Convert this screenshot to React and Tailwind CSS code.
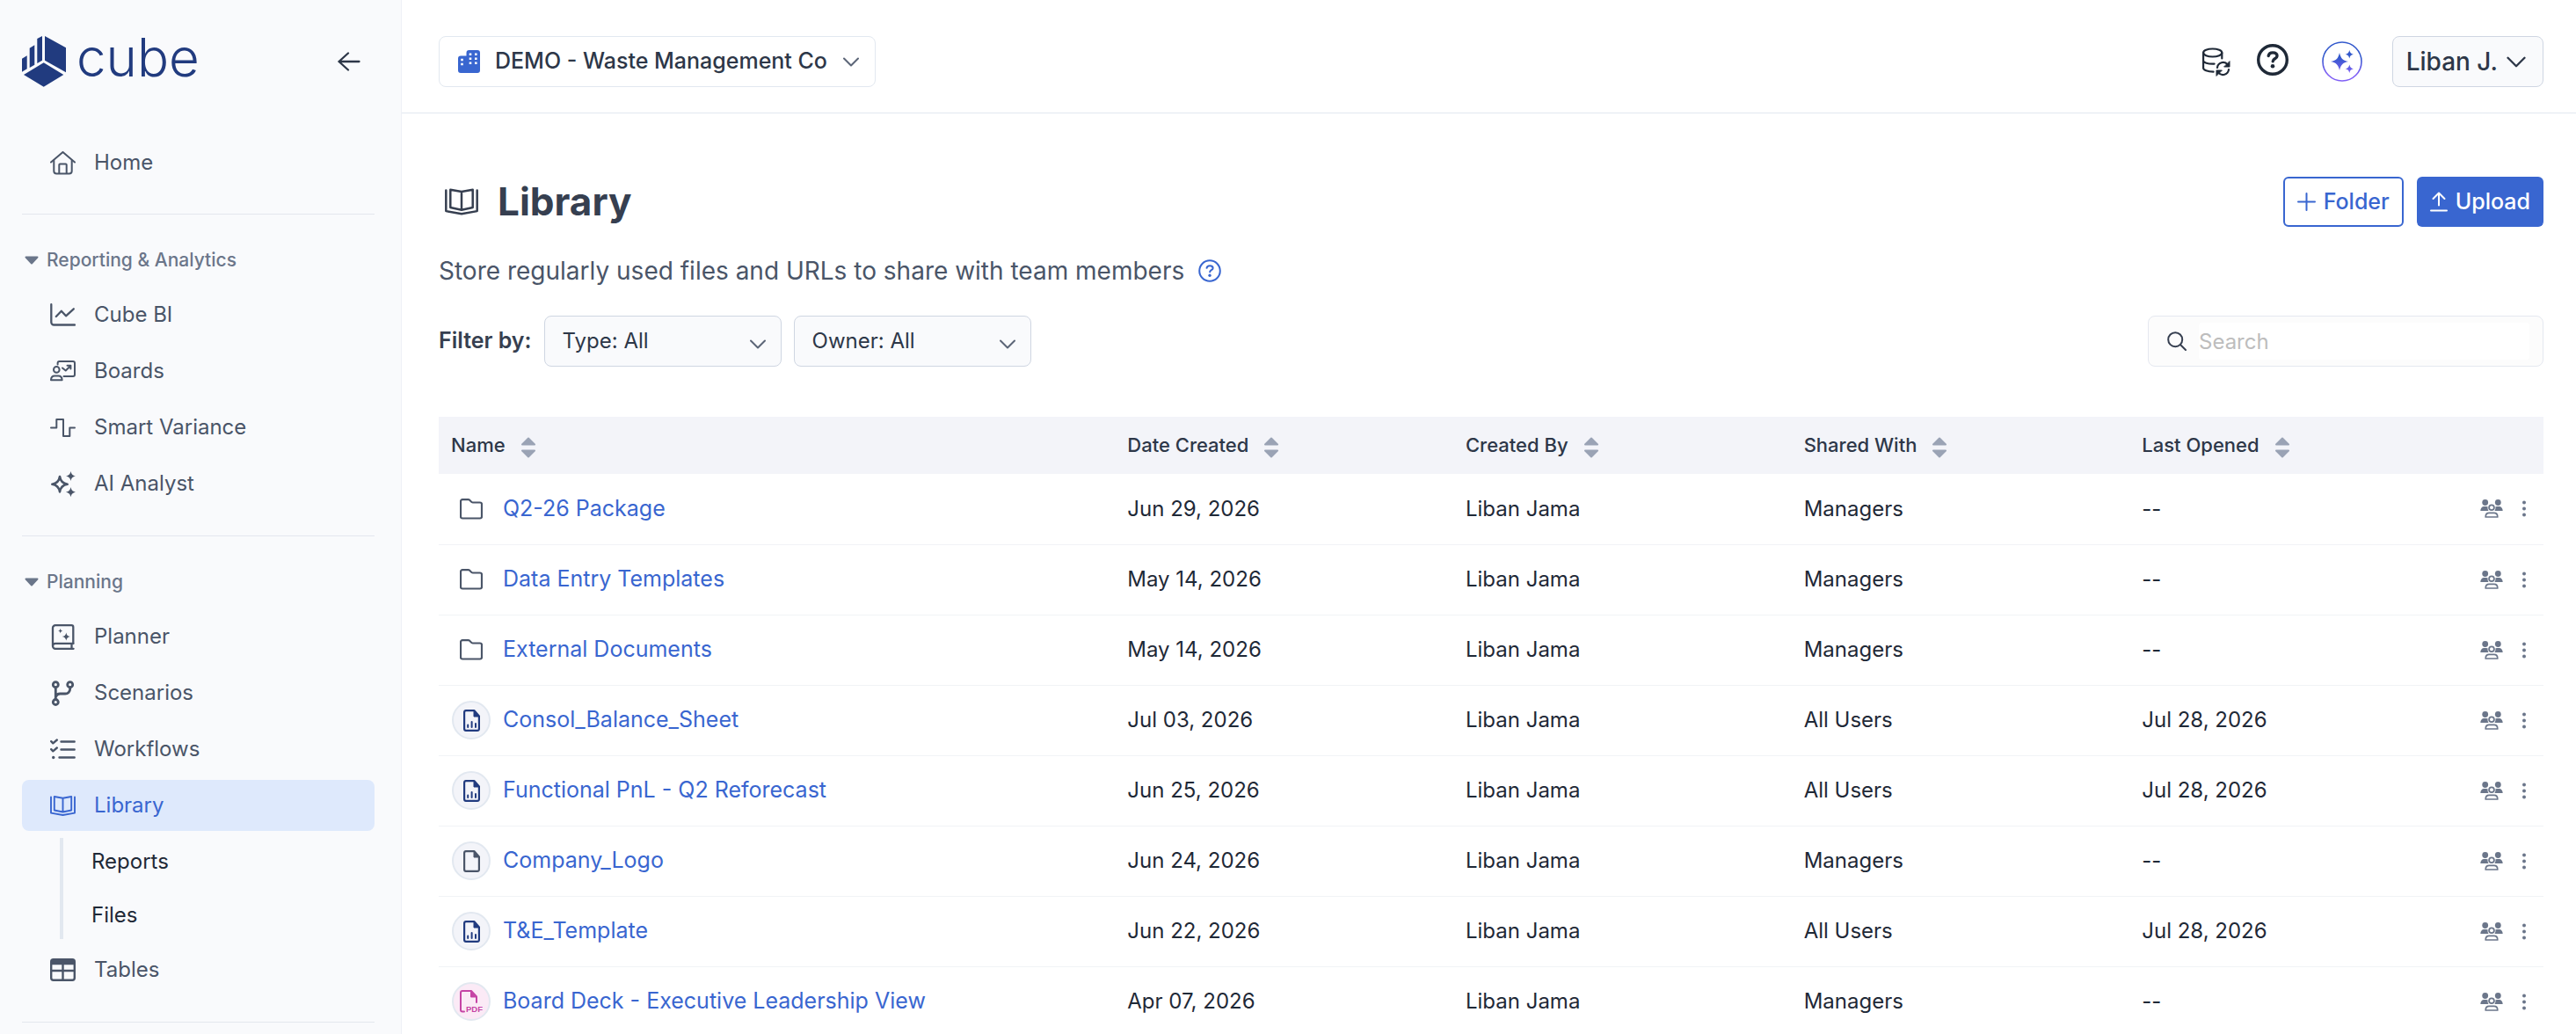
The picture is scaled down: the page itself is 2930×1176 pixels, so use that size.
import { useState } from 'react';

const STAR = 'M0 -10C1.5 -3.5 3.5 -1.5 10 0C3.5 1.5 1.5 3.5 0 10C-1.5 3.5 -3.5 1.5 -10 0C-3.5 -1.5 -1.5 -3.5 0 -10Z';

function Icon({ w, h, sw = 2, className = '', children }) {
  return (
    <svg
      width={w}
      height={h}
      viewBox={`0 0 ${w} ${h}`}
      fill="none"
      stroke="currentColor"
      strokeWidth={sw}
      strokeLinecap="round"
      strokeLinejoin="round"
      aria-hidden="true"
      className={`shrink-0 ${className}`}
    >
      {children}
    </svg>
  );
}

const Star = ({ x, y, s }) => (
  <path d={STAR} transform={`translate(${x} ${y}) scale(${s})`} fill="currentColor" stroke="none" />
);

const HomeIcon = () => (
  <Icon w={29} h={27}>
    <path d="M1 12.5 14.5 1 28 12.5" />
    <path d="M4.3 10.5V22.5a3 3 0 0 0 3 3h14.4a3 3 0 0 0 3-3V10.5" />
    <path d="M10.3 25V15.5a1 1 0 0 1 1-1h6.4a1 1 0 0 1 1 1V25" />
  </Icon>
);

const ChartIcon = () => (
  <Icon w={29} h={26} sw={2.3}>
    <path d="M1.3 1.2V21.5a3 3 0 0 0 3 3H28" />
    <path d="M6.8 15 12.8 8.7 18 14.3 26.8 6.3" />
  </Icon>
);

const BoardsIcon = () => (
  <Icon w={29} h={24}>
    <path d="M8.6 4.5V3a2 2 0 0 1 2-2H26a2 2 0 0 1 2 2v13a2 2 0 0 1-2 2H15.5" />
    <circle cx="7.3" cy="10.4" r="3.3" />
    <path d="M1 22.3c0-3.2 2-4.8 4.3-4.8h4c2.4 0 4.3 1.6 4.3 4.8z" />
    <path d="M14 8.5l3.7 3L22.8 6.5M19.5 5.8h3.9v3.7" />
  </Icon>
);

const VarianceIcon = () => (
  <Icon w={29} h={21}>
    <path d="M1 10.5H7.3V1H15V20H22.3V10.5H28" />
  </Icon>
);

const SparkleIcon = () => (
  <Icon w={29} h={29} sw={2.6}>
    <path d="M11 6c.8 5.3 3.4 7.9 8.7 8.7-5.3.8-7.9 3.4-8.7 8.7-.8-5.3-3.4-7.9-8.7-8.7C7.6 13.9 10.2 11.3 11 6z" />
    <Star x={23.5} y={5.5} s={0.56} />
    <Star x={23.5} y={23.7} s={0.56} />
  </Icon>
);

const PlannerIcon = () => (
  <Icon w={29} h={29} sw={2.3}>
    <path d="M26.6 21.8H6a3 3 0 0 0 0 6H26.6M3 24.8V4.2a3 3 0 0 1 3-3h18.3a2 2 0 0 1 2 2V21.8M24.5 22v5.5" />
    <Star x={11.7} y={7.5} s={0.28} />
    <Star x={18.3} y={14} s={0.46} />
  </Icon>
);

const BranchIcon = () => (
  <Icon w={29} h={29} sw={2.8}>
    <circle cx="6.3" cy="4.7" r="3" />
    <circle cx="22.7" cy="4.7" r="3" />
    <circle cx="6.3" cy="24.5" r="3" />
    <path d="M6.3 8v13M22.7 8v1.5a5.5 5.5 0 0 1-5.5 5.5H11.5a5 5 0 0 0-5 3.5" />
  </Icon>
);

const ChecklistIcon = () => (
  <Icon w={29} h={24} sw={2.4}>
    <path d="M1.2 3.2 3.3 5.3 7.8 1.5M1.2 12.2l2.1 2.1 4.5-3.8M12.5 3.5H27.7M12.5 12.5H27.7M10.5 21.5H27.7" />
    <circle cx="3.7" cy="21.5" r="1.7" fill="currentColor" stroke="none" />
  </Icon>
);

const BookIcon = ({ w = 29, h = 23 }) => (
  <svg
    width={w}
    height={h}
    viewBox="0 0 29 23"
    fill="none"
    stroke="currentColor"
    strokeWidth="1.9"
    strokeLinecap="round"
    strokeLinejoin="round"
    aria-hidden="true"
    className="shrink-0"
  >
    <path d="M1 1.5V19.6L14.5 22 28 19.6V1.5" />
    <path d="M4.8 1 14.5 2.7 24.2 1V16.5L14.5 18.5 4.8 16.5zM14.5 2.7V18.5" />
  </svg>
);

const TableIcon = () => (
  <Icon w={29} h={26} sw={2.4}>
    <rect x="1.2" y="1.2" width="26.6" height="23.6" rx="2.5" />
    <path d="M1.5 1.5h26v5h-26z" fill="currentColor" stroke="none" />
    <path d="M2 6h25M2 14h25M14.5 6v18" />
  </Icon>
);

const Chevron = ({ w = 18, h = 11, className = '' }) => (
  <svg
    width={w}
    height={h}
    viewBox="0 0 18 11"
    fill="none"
    stroke="currentColor"
    strokeWidth="2"
    strokeLinecap="round"
    strokeLinejoin="round"
    aria-hidden="true"
    className={`shrink-0 ${className}`}
  >
    <path d="M1 1.5 9 9.5 17 1.5" />
  </svg>
);

const BuildingIcon = () => (
  <svg width="26" height="26" viewBox="0 0 26 26" aria-hidden="true" className="shrink-0 text-[#3966d0]">
    <path fill="currentColor" d="M3 6.5H9.5V3a3 3 0 0 1 3-3H22a3 3 0 0 1 3 3V23a3 3 0 0 1-3 3H3a3 3 0 0 1-3-3V9.5a3 3 0 0 1 3-3z" />
    <path stroke="#fff" strokeWidth="2.6" d="M4.5 9.7v2.6M4.5 14.7v2.6M14 3.5v2.6M14 8.5v2.6M14 13.5v2.6M20.3 3.5v2.6M20.3 8.5v2.6M20.3 13.5v2.6" />
  </svg>
);

const DatabaseIcon = () => (
  <Icon w={32} h={33} sw={2.2}>
    <ellipse cx="11.7" cy="6" rx="10.6" ry="4.5" />
    <path d="M1.1 6V23.5c0 2 4.5 4 11.5 4.2M1.1 15c0 2 5 4 12.5 3.6M22.3 6V12.5" />
    <path d="M17 23a6.6 6.6 0 0 1 11.8-3.4M30 25a6.6 6.6 0 0 1-11.8 3.4" />
    <path d="M31 16v6h-6zM16 32v-6h6z" fill="currentColor" strokeWidth="1" />
  </Icon>
);

const HelpIcon = ({ size, sw }) => (
  <svg
    width={size}
    height={size}
    viewBox="0 0 36 36"
    fill="none"
    stroke="currentColor"
    strokeWidth={sw}
    strokeLinecap="round"
    strokeLinejoin="round"
    aria-hidden="true"
  >
    <circle cx="18" cy="18" r="16.3" />
    <path d="M13.2 13.6c.4-2.6 2.2-3.7 4.9-3.7s4.9 1.3 4.9 3.8c0 3.1-4.8 3.1-4.8 6" />
    <circle cx="18" cy="25.3" r="2.3" fill="currentColor" stroke="none" />
  </svg>
);

const AiBadgeIcon = () => (
  <svg width="46" height="46" viewBox="0 0 46 46" fill="none" aria-hidden="true">
    <defs>
      <linearGradient id="ai-ring" x1="0" y1="0" x2="0" y2="46" gradientUnits="userSpaceOnUse">
        <stop offset="0.4" stopColor="#3359cc" />
        <stop offset="0.8" stopColor="#8060f5" />
      </linearGradient>
    </defs>
    <circle cx="23" cy="23" r="22" stroke="url(#ai-ring)" strokeWidth="1.6" />
    <g fill="url(#ai-ring)">
      <path d="M20 13c1.5 6.5 3.5 8.5 10 10-6.500 1.5-8.500 3.5-10 10-1.500-6.500-3.500-8.500-10-10 6.500-1.500 8.500-3.500 10-10z" />
      <path d="M31.3 10c.8 3 1.700 4 4.700 4.800-3 .8-3.900 1.700-4.700 4.700-.8-3-1.700-3.900-4.700-4.700 3-.8 3.900-1.800 4.700-4.800z" />
      <path d="M31.3 26.500c.8 3 1.700 4 4.700 4.800-3 .8-3.900 1.700-4.700 4.700-.8-3-1.700-3.900-4.700-4.700 3-.8 3.900-1.800 4.700-4.800z" />
    </g>
  </svg>
);

const FolderIcon = () => (
  <Icon w={26} h={24} sw={2.2}>
    <path d="M3 1.2H9.7c2.3 0 2.8 3.3 5 3.3H23a2 2 0 0 1 2 2V20.500a2 2 0 0 1-2 2H3a2 2 0 0 1-2-2V3.2a2 2 0 0 1 2-2z" />
  </Icon>
);

const FileIcon = ({ chart }) => (
  <Icon w={19} h={25} sw={2.2}>
    <path d="M3 1.1H12.5L17.900 7.5V22a2 2 0 0 1-2 1.900H3a2 2 0 0 1-1.900-1.900V3a2 2 0 0 1 1.900-1.900z" />
    <path d="M12 1.5V8h6z" fill="currentColor" strokeWidth="1" />
    {chart && <path d="M5.2 17.5v2.5M9.600 14v6M14 16v4" strokeWidth="2" />}
  </Icon>
);

const PdfIcon = () => (
  <svg
    width="26"
    height="26"
    viewBox="0 0 26 26"
    fill="none"
    stroke="currentColor"
    strokeWidth="2"
    strokeLinecap="round"
    strokeLinejoin="round"
    aria-hidden="true"
  >
    <path d="M5 24.5H3a2 2 0 0 1-2-2V3a2 2 0 0 1 2-2h10l6 6.500V14" />
    <path d="M12.500 1.5V8h6z" fill="currentColor" strokeWidth="1" />
    <text x="7" y="25" fill="currentColor" stroke="none" fontFamily="Liberation Sans, sans-serif" fontWeight="700" fontSize="9.5">PDF</text>
  </svg>
);

const PeopleIcon = () => (
  <svg width="26" height="21" viewBox="0 0 26 21" fill="currentColor" aria-hidden="true">
    <circle cx="5.7" cy="3.5" r="3.4" />
    <circle cx="20.3" cy="3.5" r="3.4" />
    <path d="M.3 13c0-3 1.700-5 4.200-5h2.500c.8 0 1.300.2 1.700.5-.5 1.500 0 3.300.9 4.500zM25.700 13c0-3-1.700-5-4.200-5H19c-.8 0-1.300.2-1.700.5.5 1.500 0 3.300-.9 4.500z" />
    <circle cx="13" cy="9.2" r="2.9" fill="none" stroke="currentColor" strokeWidth="1.8" />
    <path d="M6.2 20c0-2.900 1.700-4.600 4-4.600h5.600c2.300 0 4 1.700 4 4.600z" fill="none" stroke="currentColor" strokeWidth="1.7" strokeLinejoin="round" />
  </svg>
);

const DotsIcon = () => (
  <svg width="4" height="19" viewBox="0 0 4 19" fill="currentColor" aria-hidden="true">
    <circle cx="2" cy="2.5" r="2" />
    <circle cx="2" cy="9.5" r="2" />
    <circle cx="2" cy="16.5" r="2" />
  </svg>
);

const SortIcon = () => (
  <svg width="16" height="24" viewBox="0 0 16 24" fill="#9aa3b5" stroke="#9aa3b5" strokeWidth="2" strokeLinejoin="round" aria-hidden="true">
    <path d="M8 1.500 15 8.500H1zM8 22.500 15 15.500H1z" />
  </svg>
);

const CaretIcon = () => (
  <svg width="16" height="10" viewBox="0 0 16 10" fill="currentColor" stroke="currentColor" strokeWidth="2" strokeLinejoin="round" aria-hidden="true">
    <path d="M1.500 1.500h13L8 8.500z" />
  </svg>
);

const LogoMark = () => (
  <svg width="50" height="58" viewBox="0 0 50 58" fill="currentColor" aria-hidden="true">
    <path d="M0 25.7 5.7 22.3V37.3L0 40.7zM8.7 13.7l5.6-3.4V32.7L8.7 36zM17.3 3 23 0V27.7L17.3 31zM26 0 50 13.3V41.3L26 27.7zM24.7 30.3 47.3 44 24.7 57.7 2 44z" />
  </svg>
);

const REPORTING = [
  { label: 'Cube BI', icon: ChartIcon },
  { label: 'Boards', icon: BoardsIcon },
  { label: 'Smart Variance', icon: VarianceIcon },
  { label: 'AI Analyst', icon: SparkleIcon },
];

const PLANNING = [
  { label: 'Planner', icon: PlannerIcon },
  { label: 'Scenarios', icon: BranchIcon },
  { label: 'Workflows', icon: ChecklistIcon },
  { label: 'Library', icon: BookIcon, children: ['Reports', 'Files'] },
  { label: 'Tables', icon: TableIcon },
];

const FILES = [
  { name: 'Q2-26 Package', kind: 'folder', created: 'Jun 29, 2026', shared: 'Managers', opened: '--' },
  { name: 'Data Entry Templates', kind: 'folder', created: 'May 14, 2026', shared: 'Managers', opened: '--' },
  { name: 'External Documents', kind: 'folder', created: 'May 14, 2026', shared: 'Managers', opened: '--' },
  { name: 'Consol_Balance_Sheet', kind: 'sheet', created: 'Jul 03, 2026', shared: 'All Users', opened: 'Jul 28, 2026' },
  { name: 'Functional PnL - Q2 Reforecast', kind: 'sheet', created: 'Jun 25, 2026', shared: 'All Users', opened: 'Jul 28, 2026' },
  { name: 'Company_Logo', kind: 'file', created: 'Jun 24, 2026', shared: 'Managers', opened: '--' },
  { name: 'T&E_Template', kind: 'sheet', created: 'Jun 22, 2026', shared: 'All Users', opened: 'Jul 28, 2026' },
  { name: 'Board Deck - Executive Leadership View', kind: 'pdf', created: 'Apr 07, 2026', shared: 'Managers', opened: '--' },
];

function NavItem({ label, icon: NavIcon, active, onSelect }) {
  return (
    <a
      href="#"
      onClick={() => onSelect(label)}
      aria-current={active ? 'page' : undefined}
      className={`flex h-[58px] items-center gap-[21px] rounded-lg pl-8 text-2xl ${active ? 'bg-[#dee9fc] text-[#3966d0]' : 'text-[#4a5568]'}`}
    >
      <NavIcon />
      {label}
    </a>
  );
}

function NavGroup({ title, items, page, onSelect }) {
  return (
    <section className="border-t border-[#e3e7ee] pt-[38px] pb-[30px]">
      <button className="mb-[19px] flex h-7 items-center gap-[9px] pl-[3px] text-[21px] font-medium text-[#6b768a]">
        <CaretIcon />
        {title}
      </button>
      <div className="flex flex-col gap-[6px]">
        {items.map(item => (
          <div key={item.label}>
            <NavItem {...item} active={page === item.label} onSelect={onSelect} />
            {item.children && (
              <div className="mt-2 ml-[43px] flex flex-col gap-[7px] border-l-4 border-[#e2e8f0] pl-8">
                {item.children.map(child => (
                  <a key={child} href="#" className="flex h-[54px] items-center text-2xl text-[#1f2937]">{child}</a>
                ))}
              </div>
            )}
          </div>
        ))}
      </div>
    </section>
  );
}

function Sidebar() {
  const [page, setPage] = useState('Library');

  return (
    <aside className="w-[457px] shrink-0 border-r border-[#eef1f6] bg-[#f9fafc] pr-[30px] pl-[25px]">
      <div className="flex items-center justify-between pt-[41px] pr-4">
        <a href="#" className="flex h-[58px] items-center gap-3 text-[#213b7f]">
          <LogoMark />
          <span className="pb-[10px] text-[60px] leading-[60px] font-light">cube</span>
        </a>
        <button aria-label="Collapse sidebar" className="text-[#2d3748]">
          <Icon w={26} h={22} sw={2.3}>
            <path d="M24.500 11H1.500M12 1.500 1.500 11 12 20.500" />
          </Icon>
        </button>
      </div>
      <nav className="mt-[57px]">
        <div className="pb-[29px]">
          <NavItem label="Home" icon={HomeIcon} active={page === 'Home'} onSelect={setPage} />
        </div>
        <NavGroup title="Reporting & Analytics" items={REPORTING} page={page} onSelect={setPage} />
        <NavGroup title="Planning" items={PLANNING} page={page} onSelect={setPage} />
        <div className="border-t border-[#e3e7ee]" />
      </nav>
    </aside>
  );
}

function Topbar() {
  return (
    <header className="flex h-[129px] shrink-0 items-center justify-between border-b border-[#e2e8f0] pt-3 pr-[37px] pl-[42px]">
      <label className="relative flex h-[58px] items-center rounded-lg border border-[#e2e8f0] pl-[21px] text-[#2d3748]">
        <BuildingIcon />
        <select aria-label="Company" className="h-full appearance-none pr-[54px] pl-4 text-[25px] font-medium">
          <option>DEMO - Waste Management Co</option>
        </select>
        <Chevron className="pointer-events-none absolute right-[18px] text-[#5b6577]" />
      </label>
      <div className="flex items-center text-[#1f2937]">
        <button aria-label="Data sync" className="mr-[30px]"><DatabaseIcon /></button>
        <button aria-label="Help" className="mr-[38px] pb-1"><HelpIcon size={36} sw={3.4} /></button>
        <button aria-label="AI assistant" className="mr-[34px]"><AiBadgeIcon /></button>
        <button className="flex h-[58px] items-center gap-[10px] rounded-lg border border-[#cfd6e2] bg-[#f9fafc] pr-[19px] pl-[15px] text-[28px] font-medium text-[#2d3748]">
          Liban J.
          <Chevron w={22} h={13} />
        </button>
      </div>
    </header>
  );
}

function FilterSelect({ label, value }) {
  return (
    <label className="relative flex items-center">
      <select aria-label={label} className="h-[58px] w-[270px] appearance-none rounded-lg border border-[#cfd6e2] bg-[#f9fafc] pl-5 text-2xl text-[#2d3748]">
        <option>{value}</option>
      </select>
      <Chevron className="pointer-events-none absolute right-[18px] mt-[6px] text-[#5b6577]" />
    </label>
  );
}

function TypeBadge({ kind }) {
  if (kind === 'folder') {
    return <span className="flex w-11 justify-center text-[#4a5568]"><FolderIcon /></span>;
  }
  if (kind === 'pdf') {
    return (
      <span className="flex size-11 items-center justify-center rounded-full border-2 border-[#e2e8f0] bg-[#fbeaf6] text-[#c544a5]">
        <PdfIcon />
      </span>
    );
  }
  return (
    <span className={`flex size-11 items-center justify-center rounded-full border-2 border-[#e2e8f0] bg-[#f3f4f9] ${kind === 'sheet' ? 'text-[#213b7f]' : 'text-[#4a5568]'}`}>
      <FileIcon chart={kind === 'sheet'} />
    </span>
  );
}

function HeaderCell({ children, ...props }) {
  return (
    <th className="px-[14px] text-left font-medium" {...props}>
      <button className="flex items-center gap-[18px]">
        {children}
        <span className="pt-1"><SortIcon /></span>
      </button>
    </th>
  );
}

function FileTable() {
  return (
    <table className="mt-[57px] w-full table-fixed border-collapse">
      <colgroup>
        <col span={6} />
        <col className="w-[86px]" />
      </colgroup>
      <thead>
        <tr className="h-[65px] bg-[#f3f4f9] text-[22px] text-[#2d3748]">
          <HeaderCell colSpan={2}>Name</HeaderCell>
          <HeaderCell>Date Created</HeaderCell>
          <HeaderCell>Created By</HeaderCell>
          <HeaderCell>Shared With</HeaderCell>
          <HeaderCell>Last Opened</HeaderCell>
          <th aria-label="Actions" />
        </tr>
      </thead>
      <tbody className="text-2xl text-[#1f2937]">
        {FILES.map(file => (
          <tr key={file.name} className="h-20 border-b border-[#f1f3f6]">
            <td colSpan={2} className="px-[15px]">
              <a href="#" className="flex items-center gap-[14px] text-[25px] text-[#3966d0]">
                <TypeBadge kind={file.kind} />
                {file.name}
              </a>
            </td>
            <td className="px-[14px]">{file.created}</td>
            <td className="px-[14px]">Liban Jama</td>
            <td className="px-[14px]">{file.shared}</td>
            <td className="px-[14px]">{file.opened}</td>
            <td>
              <div className="flex items-center gap-[22px] pl-[14px] text-[#6b768a]">
                <button aria-label="Sharing"><PeopleIcon /></button>
                <button aria-label="More actions"><DotsIcon /></button>
              </div>
            </td>
          </tr>
        ))}
      </tbody>
    </table>
  );
}

export default function App() {
  return (
    <div className="flex h-screen overflow-hidden bg-white font-['Inter',sans-serif]">
      <Sidebar />
      <div className="flex min-w-0 flex-1 flex-col">
        <Topbar />
        <main className="flex-1 pt-[72px] pr-[37px] pl-[42px]">
          <div className="flex items-center justify-between">
            <h1 className="flex items-center gap-[22px] pl-[7px] text-[44px] leading-[57px] font-bold text-[#363f50]">
              <BookIcon w={38} h={31} />
              Library
            </h1>
            <div className="flex gap-[15px] text-[25px] font-medium">
              <button className="flex h-[57px] items-center gap-[9px] rounded-md border-2 border-[#3966d0] px-[14px] text-[#3966d0]">
                <Icon w={21} h={21}><path d="M10.5 1v19M1 10.5h19" /></Icon>
                Folder
              </button>
              <button className="flex h-[57px] items-center gap-[9px] rounded-md bg-[#3966d0] px-[15px] text-white">
                <Icon w={20} h={23}><path d="M1 21.5h18M10 15.5V1.5M3.5 8 10 1.5 16.5 8" /></Icon>
                Upload
              </button>
            </div>
          </div>
          <p className="mt-8 flex h-9 items-center gap-4 text-[28px] text-[#4a5568]">
            Store regularly used files and URLs to share with team members
            <button aria-label="About the library" className="text-[#3966d0]"><HelpIcon size={26} sw={2.8} /></button>
          </p>
          <div className="mt-[33px] flex items-center justify-between">
            <div className="flex items-center gap-[14px]">
              <span className="text-[25px] font-semibold text-[#363f50]">Filter by:</span>
              <FilterSelect label="Type" value="Type: All" />
              <FilterSelect label="Owner" value="Owner: All" />
            </div>
            <label className="flex h-[58px] w-[450px] items-center gap-[14px] rounded-lg border border-[#e5e8f0] bg-[#fcfcfc] pr-[15px] pl-[21px] text-[#363f50]">
              <Icon w={22} h={22}>
                <circle cx="9.2" cy="9.2" r="8" />
                <path d="M15 15 21 21" />
              </Icon>
              <input
                type="search"
                aria-label="Search"
                placeholder="Search"
                className="h-[42px] min-w-0 flex-1 rounded bg-white text-2xl outline-none placeholder:text-[#bdbdbd]"
              />
            </label>
          </div>
          <FileTable />
        </main>
      </div>
    </div>
  );
}
